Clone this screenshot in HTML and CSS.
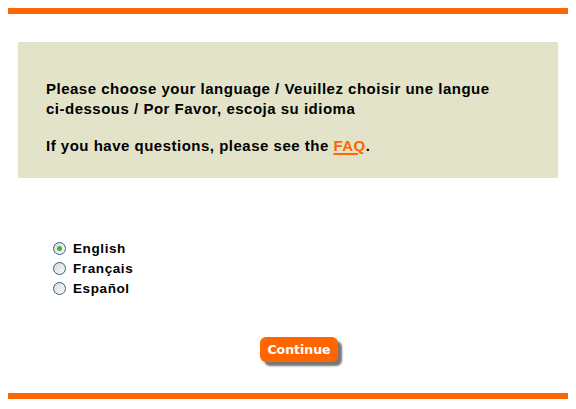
FILE: index.html
```html
<!DOCTYPE html>
<html>
<head>
<meta charset="utf-8">
<link rel="stylesheet" href="styles.css">
</head>
<body>
<div class="bar"></div>
<div class="intro">
  <p>Please choose your language / Veuillez choisir une langue <span class="nowrap">ci-dessous</span> / Por Favor, escoja su idioma</p>
  <p class="faq-line">If you have questions, please see the <a href="#">FAQ</a>.</p>
</div>
<div class="choices">
  <label class="choice"><span class="radio checked"></span>English</label>
  <label class="choice"><span class="radio"></span>Français</label>
  <label class="choice"><span class="radio"></span>Español</label>
</div>
<div class="actions">
  <span class="btn">Continue</span>
</div>
<div class="bar"></div>
</body>
</html>
```

FILE: styles.css
```css
html, body { background: #fff; }
body {
  margin: 8px;
  font-family: "Liberation Sans", Arial, sans-serif;
  color: #000;
}
.bar {
  height: 6px;
  width: 560px;
  background: #ff6600;
}
.intro {
  margin: 28px 0 0 10px;
  width: 540px;
  height: 136px;
  box-sizing: border-box;
  padding: 37px 40px 0 28px;
  background: #e3e3c9;
  font-size: 15px;
  letter-spacing: 0.5px;
  font-weight: bold;
  line-height: 20px;
}
.intro p { margin: 0; }
.intro .nowrap { white-space: nowrap; }
.intro .faq-line { margin-top: 17px; }
.intro a {
  color: #ff6600;
  text-decoration: underline;
  text-decoration-thickness: 2px;
  text-underline-offset: 2px;
}
.choices {
  margin: 60px 0 0 45px;
  display: flex;
  flex-direction: column;
}
.choice {
  display: flex;
  align-items: center;
  height: 20px;
  font-size: 13.5px;
  letter-spacing: 0.6px;
  font-weight: bold;
}
.radio {
  width: 11px;
  height: 11px;
  border: 1px solid #2f5f8f;
  border-radius: 50%;
  background: linear-gradient(135deg, #d8d8d8, #fbfbfb);
  margin-right: 7px;
  position: relative;
  box-sizing: content-box;
}
.radio.checked::after {
  content: "";
  position: absolute;
  left: 3px;
  top: 3px;
  width: 5px;
  height: 5px;
  border-radius: 50%;
  background: #3fb43a;
}
.actions {
  display: flex;
  margin: 39px 0 0 252px;
  height: 56px;
}
.btn {
  width: 78px;
  height: 25px;
  box-sizing: border-box;
  background: #ff6600;
  color: #fff;
  border-radius: 6px;
  box-shadow: 4px 4px 2px #777;
  font-family: "DejaVu Sans", Verdana, sans-serif;
  font-weight: bold;
  font-size: 12.5px;
  display: flex;
  align-items: center;
  justify-content: center;
}
```
